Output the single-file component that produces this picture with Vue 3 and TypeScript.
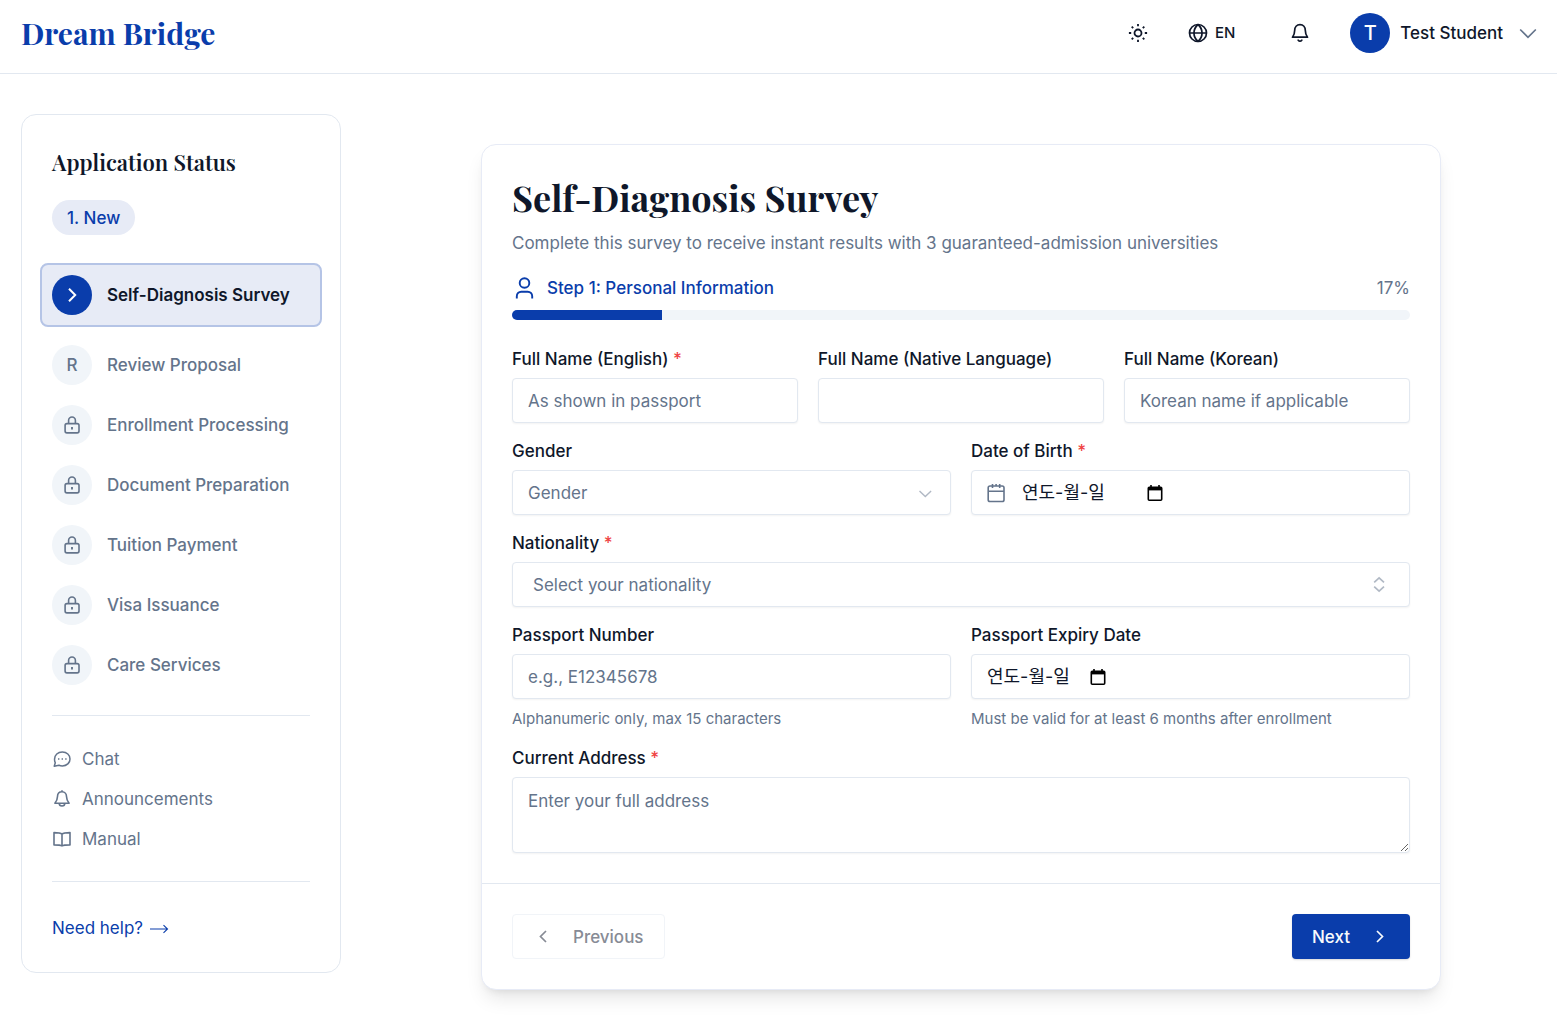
<script setup lang="ts">
import { ref } from 'vue'

interface Step {
  label: string
  state: 'active' | 'open' | 'locked'
}

const steps: Step[] = [
  { label: 'Self-Diagnosis Survey', state: 'active' },
  { label: 'Review Proposal', state: 'open' },
  { label: 'Enrollment Processing', state: 'locked' },
  { label: 'Document Preparation', state: 'locked' },
  { label: 'Tuition Payment', state: 'locked' },
  { label: 'Visa Issuance', state: 'locked' },
  { label: 'Care Services', state: 'locked' },
]

const progress = 17
const stepCount = 6

const englishName = ref('')
const nativeName = ref('')
const koreanName = ref('')
const gender = ref('')
const birthDate = ref('')
const nationality = ref('')
const passport = ref('')
const expiryDate = ref('')
const address = ref('')
</script>

<template>
  <div class="page">
    <header class="topbar">
      <a class="brand" href="#">Dream Bridge</a>
      <div class="actions">
        <button class="icon-btn" type="button" aria-label="Toggle theme">
          <svg width="20" height="20" viewBox="0 0 20 20" fill="none" stroke="currentColor" stroke-width="1.8">
            <circle cx="10" cy="10" r="3.5" />
            <path d="M10 .9v2.300M10 16.800v2.300M.9 10h2.300M16.800 10h2.300M3.700 3.700l1.500 1.500M14.800 14.800l1.500 1.500M3.700 16.300l1.500-1.500M14.800 5.200l1.500-1.500" />
          </svg>
        </button>
        <button class="lang" type="button">
          <svg width="20" height="20" viewBox="0 0 20 20" fill="none" stroke="currentColor" stroke-width="1.700">
            <circle cx="10" cy="10" r="8.500" />
            <path d="M1.500 10h17M10 1.500c-5.400 4.800-5.400 12.200 0 17M10 1.500c5.400 4.800 5.400 12.200 0 17" />
          </svg>
          <span>EN</span>
        </button>
        <button class="icon-btn" type="button" aria-label="Notifications">
          <svg width="20" height="20" viewBox="0 0 20 20" fill="none" stroke="currentColor" stroke-width="1.700" stroke-linejoin="round">
            <path d="M10 1.600c-3.300 0-5.300 2.500-5.300 5.700 0 3.700-1.100 5.400-2.200 6.900h15c-1.100-1.500-2.200-3.200-2.200-6.900 0-3.200-2-5.700-5.300-5.700z" />
            <path d="M8.200 17.200c.5.600 1.100.900 1.800.900s1.300-.3 1.800-.9" stroke-linecap="round" />
          </svg>
        </button>
        <button class="user" type="button">
          <span class="avatar">T</span>
          <span>Test Student</span>
          <svg class="caret" width="18" height="18" viewBox="0 0 18 18" fill="none" stroke="currentColor" stroke-width="1.700">
            <path d="M1.200 5.500l7.800 7.800 7.800-7.800" />
          </svg>
        </button>
      </div>
    </header>

    <div class="layout">
      <aside class="sidebar">
        <h2>Application Status</h2>
        <span class="pill">1. New</span>

        <ol class="steps">
          <li v-for="step in steps" :key="step.label" class="step" :class="step.state">
            <span class="dot">
              <svg v-if="step.state === 'active'" width="20" height="20" viewBox="0 0 20 20" fill="none" stroke="currentColor" stroke-width="2">
                <path d="M7 3.800l6.200 6.200L7 16.200" />
              </svg>
              <template v-else-if="step.state === 'open'">R</template>
              <svg v-else width="20" height="20" viewBox="0 0 20 20" fill="none" stroke="currentColor" stroke-width="1.600">
                <rect x="3.100" y="8.600" width="13.900" height="9.300" rx="1.800" />
                <path d="M6.600 8.600V5.400a3.400 3.400 0 0 1 6.800 0v3.200" />
                <path d="M10 12v2.600" stroke-width="1.900" />
              </svg>
            </span>
            <span>{{ step.label }}</span>
          </li>
        </ol>

        <nav class="links">
          <a href="#">
            <svg width="20" height="20" viewBox="0 0 20 20" fill="none" stroke="currentColor" stroke-width="1.500" stroke-linejoin="round">
              <path d="M10.300 3c4.500 0 7.700 3 7.700 6.900 0 4-3.200 7-7.700 7-1.200 0-2.300-.2-3.300-.600L2.200 17.200l1.100-3.400A6.600 6.600 0 0 1 2.600 9.900C2.600 6 5.800 3 10.300 3z" />
              <path d="M6 10h1.400M9.600 10H11M13.200 10h1.400" />
            </svg>
            Chat
          </a>
          <a href="#">
            <svg width="20" height="20" viewBox="0 0 20 20" fill="none" stroke="currentColor" stroke-width="1.600" stroke-linejoin="round">
              <path d="M10 2.800c-2.900 0-4.500 2.200-4.500 4.800 0 3.400-1.300 5-2.600 6.600h14.200c-1.300-1.600-2.600-3.200-2.600-6.600 0-2.600-1.600-4.800-4.500-4.800zM10 1.200v1.600M7.200 14.200a2.800 2.800 0 0 0 5.600 0" />
            </svg>
            Announcements
          </a>
          <a href="#">
            <svg width="20" height="20" viewBox="0 0 20 20" fill="none" stroke="currentColor" stroke-width="1.600" stroke-linejoin="round">
              <path d="M10 5C8.600 3.700 7 3.600 2 3.600v12.300c5 0 6.600.1 8 1 1.400-.9 3-1 8-1V3.600c-5 0-6.600.1-8 1.400zM10 5v11.900" />
            </svg>
            Manual
          </a>
        </nav>

        <a class="help" href="#">
          Need help?
          <svg width="20" height="12" viewBox="0 0 20 12" fill="none" stroke="currentColor" stroke-width="1.100">
            <path d="M0 7h17.500M13.500 3.200l4 3.800-4 3.800" />
          </svg>
        </a>
      </aside>

      <main class="main">
        <form class="card" @submit.prevent>
          <div class="body">
            <h1>Self-Diagnosis Survey</h1>
            <p class="subtitle">Complete this survey to receive instant results with 3 guaranteed-admission universities</p>

            <div class="progress-head">
              <svg width="25" height="25" viewBox="0 0 25 25" fill="none" stroke="currentColor" stroke-width="1.900">
                <circle cx="12.500" cy="7" r="4.800" />
                <path d="M4.800 22.500v-2.300c0-2.600 1.900-4.500 4.500-4.500h6.400c2.600 0 4.500 1.900 4.500 4.500v2.300" />
              </svg>
              <span class="progress-title">Step 1: Personal Information</span>
              <span class="percent">{{ progress }}%</span>
            </div>
            <div class="track" role="progressbar" :aria-valuenow="progress" aria-valuemin="0" aria-valuemax="100">
              <div class="fill" :style="{ width: 100 / stepCount + '%' }"></div>
            </div>

            <div class="fields">
              <div class="row three">
                <div class="field">
                  <label for="name-en">Full Name (English) <span class="req">*</span></label>
                  <input id="name-en" v-model="englishName" class="control" type="text" placeholder="As shown in passport" />
                </div>
                <div class="field">
                  <label for="name-native">Full Name (Native Language)</label>
                  <input id="name-native" v-model="nativeName" class="control" type="text" />
                </div>
                <div class="field">
                  <label for="name-ko">Full Name (Korean)</label>
                  <input id="name-ko" v-model="koreanName" class="control" type="text" placeholder="Korean name if applicable" />
                </div>
              </div>

              <div class="row two">
                <div class="field">
                  <label for="gender">Gender</label>
                  <div class="select">
                    <select id="gender" v-model="gender" class="control">
                      <option value="">Gender</option>
                      <option value="female">Female</option>
                      <option value="male">Male</option>
                    </select>
                    <svg class="arrow" width="20" height="20" viewBox="0 0 20 20" fill="none" stroke="currentColor" stroke-width="1.400">
                      <path d="M3.500 8l5.800 5.500L15.100 8" />
                    </svg>
                  </div>
                </div>
                <div class="field">
                  <label for="birth">Date of Birth <span class="req">*</span></label>
                  <div class="control date birth">
                    <svg class="lead" width="20" height="20" viewBox="0 0 20 20" fill="none" stroke="currentColor" stroke-width="1.600">
                      <rect x="1.200" y="3" width="15.800" height="15.500" rx="1.800" />
                      <path d="M1.200 8.200H17M5.500 1v4M12.700 1v4M9.100 1v2" />
                    </svg>
                    <input id="birth" v-model="birthDate" type="text" placeholder="연도-월-일" />
                    <button class="picker" type="button" aria-label="Choose date of birth">
                      <svg width="16" height="16" viewBox="0 0 16 16" fill="none" stroke="currentColor" stroke-width="1.600">
                        <rect x="1.300" y="2.300" width="13.400" height="12.900" rx="1" />
                        <path d="M1.300 3.800h13.400" stroke-width="3.200" />
                        <path d="M4 0v3M12 0v3" />
                      </svg>
                    </button>
                  </div>
                </div>
              </div>

              <div class="field">
                <label for="nationality">Nationality <span class="req">*</span></label>
                <div class="select wide">
                  <select id="nationality" v-model="nationality" class="control">
                    <option value="">Select your nationality</option>
                    <option value="kr">South Korea</option>
                    <option value="vn">Vietnam</option>
                  </select>
                  <svg class="arrow" width="20" height="20" viewBox="0 0 20 20" fill="none" stroke="currentColor" stroke-width="1.600">
                    <path d="M4.200 7.400l4.900-4.600L14 7.400M4.200 11.600l4.900 4.600 4.900-4.600" />
                  </svg>
                </div>
              </div>

              <div class="row two">
                <div class="field">
                  <label for="passport">Passport Number</label>
                  <input id="passport" v-model="passport" class="control" type="text" maxlength="15" placeholder="e.g., E12345678" />
                  <p class="hint">Alphanumeric only, max 15 characters</p>
                </div>
                <div class="field">
                  <label for="expiry">Passport Expiry Date</label>
                  <div class="control date">
                    <input id="expiry" v-model="expiryDate" type="text" placeholder="연도-월-일" />
                    <button class="picker" type="button" aria-label="Choose passport expiry date">
                      <svg width="16" height="16" viewBox="0 0 16 16" fill="none" stroke="currentColor" stroke-width="1.600">
                        <rect x="1.300" y="2.300" width="13.400" height="12.900" rx="1" />
                        <path d="M1.300 3.800h13.400" stroke-width="3.200" />
                        <path d="M4 0v3M12 0v3" />
                      </svg>
                    </button>
                  </div>
                  <p class="hint">Must be valid for at least 6 months after enrollment</p>
                </div>
              </div>

              <div class="field">
                <label for="address">Current Address <span class="req">*</span></label>
                <textarea id="address" v-model="address" class="control" placeholder="Enter your full address"></textarea>
              </div>
            </div>
          </div>

          <footer class="footer">
            <button class="btn previous" type="button" disabled>
              <svg width="20" height="20" viewBox="0 0 20 20" fill="none" stroke="currentColor" stroke-width="1.700">
                <path d="M13 4l-5.500 5.500L13 15" />
              </svg>
              Previous
            </button>
            <button class="btn next" type="submit">
              Next
              <svg width="20" height="20" viewBox="0 0 20 20" fill="none" stroke="currentColor" stroke-width="1.700">
                <path d="M7 4l5.500 5.500L7 15" />
              </svg>
            </button>
          </footer>
        </form>
      </main>
    </div>
  </div>
</template>

<style>
body {
  margin: 0;
  background: #fff;
}
</style>

<style scoped>
* {
  box-sizing: border-box;
}

.page {
  color: #0f172a;
  font-family: Inter, 'Noto Sans CJK KR', sans-serif;
  font-size: 17px;
  line-height: 26px;
}

svg {
  display: block;
  flex: none;
}

button,
input,
select,
textarea {
  font: inherit;
  color: inherit;
}

button {
  display: flex;
  align-items: center;
  padding: 0;
  border: 0;
  background: none;
}

a {
  color: inherit;
  text-decoration: none;
}

h1,
h2 {
  margin: 0;
  font-family: 'Playfair Display', 'Liberation Serif', serif;
}

/* Top bar */
.topbar {
  display: flex;
  align-items: center;
  justify-content: space-between;
  height: 74px;
  padding: 0 20px 8px 21px;
  border-bottom: 1px solid #e2e8f0;
}

.brand {
  color: #0a3dab;
  font-family: 'Playfair Display', 'Liberation Serif', serif;
  font-size: 30px;
  font-weight: 700;
  line-height: 40px;
}

.actions {
  display: flex;
  align-items: center;
  font-weight: 500;
}

.icon-btn {
  justify-content: center;
  width: 40px;
  height: 40px;
}

.lang {
  gap: 7px;
  margin: 0 45px 0 30px;
  font-size: 15px;
}

.user {
  gap: 10px;
  margin-left: 30px;
}

.avatar {
  width: 40px;
  height: 40px;
  border-radius: 50%;
  background: #0a3dab;
  color: #fff;
  font-size: 20px;
  line-height: 40px;
  text-align: center;
}

.caret {
  margin-left: 6px;
  color: #64748b;
}

/* Page columns */
.layout {
  display: grid;
  grid-template-columns: 320px minmax(0, 1fr);
  align-items: start;
  gap: 45px;
  padding: 40px 21px 30px;
}

.sidebar {
  padding: 30px;
  border: 1px solid #e2e8f0;
  border-radius: 15px;
}

h2 {
  font-size: 22px;
  font-weight: 600;
  line-height: 35px;
}

.pill {
  display: block;
  width: fit-content;
  margin: 20px 0 28px;
  padding: 5px 15px 4px;
  border-radius: 18px;
  background: #e7ebf6;
  color: #0a3dab;
  font-weight: 500;
}

.steps {
  display: flex;
  flex-direction: column;
  gap: 20px;
  margin: 0;
  padding: 0 0 30px;
  border-bottom: 1px solid #e2e8f0;
  list-style: none;
}

.step {
  display: flex;
  align-items: center;
  gap: 15px;
  color: #64748b;
  font-weight: 500;
}

.step.active {
  margin: 0 -12px -2px;
  padding: 10px;
  border: 2px solid #b5c4e6;
  border-radius: 8px;
  background: #e7ebf6;
  color: #0f172a;
  font-weight: 600;
}

.dot {
  display: flex;
  flex: none;
  align-items: center;
  justify-content: center;
  width: 40px;
  height: 40px;
  border-radius: 50%;
  background: #f1f5f9;
}

.active .dot {
  background: #0a3dab;
  color: #fff;
}

.links {
  display: flex;
  flex-direction: column;
  gap: 14px;
  padding: 30px 0 29px;
  border-bottom: 1px solid #e2e8f0;
  color: #64748b;
}

.links a {
  display: flex;
  align-items: center;
  gap: 10px;
}

.help {
  display: flex;
  align-items: center;
  gap: 7px;
  padding-top: 32px;
  color: #0a3dab;
  line-height: 28px;
}

/* Survey card */
.main {
  padding-top: 30px;
}

.card {
  max-width: 960px;
  margin: 0 auto;
  border: 1px solid #e7ebf6;
  border-radius: 15px;
  background: #fff;
  box-shadow: 0 12px 19px -4px rgb(0 0 0 / 10%), 0 5px 8px -5px rgb(0 0 0 / 10%);
}

.body {
  padding: 30px;
}

h1 {
  font-size: 36px;
  font-weight: 700;
  line-height: 45px;
}

.subtitle {
  margin: 10px 0 19px;
  color: #64748b;
}

.progress-head {
  display: flex;
  align-items: center;
  gap: 10px;
  margin-bottom: 9px;
  color: #0a3dab;
}

.progress-title {
  flex: 1;
  font-weight: 500;
}

.percent {
  color: #64748b;
}

.track {
  height: 10px;
  margin-bottom: 29px;
  overflow: hidden;
  border-radius: 5px;
  background: #f1f5f9;
}

.fill {
  height: 100%;
  background: #0a3dab;
}

.fields {
  display: flex;
  flex-direction: column;
  gap: 18px;
}

.row {
  display: grid;
  gap: 20px;
}

.three {
  grid-template-columns: repeat(3, minmax(0, 1fr));
}

.two {
  grid-template-columns: repeat(2, minmax(0, 1fr));
}

.field {
  display: flex;
  flex-direction: column;
  gap: 9px;
}

label {
  font-weight: 500;
  line-height: 20px;
}

.req {
  color: #ef4444;
}

.control {
  width: 100%;
  height: 45px;
  padding: 0 15px;
  border: 1px solid #e2e8f0;
  border-radius: 4px;
  outline: none;
  background: #fff;
  box-shadow: 0 1px 2px rgb(0 0 0 / 5%);
}

.control::placeholder {
  color: #64748b;
  opacity: 1;
}

textarea.control {
  display: block;
  height: 76px;
  padding: 10px 15px;
  resize: vertical;
}

.select {
  position: relative;
}

select.control {
  appearance: none;
  color: #64748b;
}

.wide select.control {
  padding: 0 20px;
}

.arrow {
  position: absolute;
  top: 13px;
  right: 15px;
  color: #64748b;
  opacity: 0.5;
  pointer-events: none;
}

.wide .arrow {
  right: 20px;
}

.date {
  display: flex;
  align-items: center;
}

.date input {
  width: 103px;
  padding: 0;
  border: 0;
  outline: none;
  background: none;
  font-size: 18px;
}

.date input::placeholder {
  color: #0f172a;
  opacity: 1;
}

.birth input {
  width: 125px;
}

.lead {
  margin-right: 15px;
  color: #64748b;
}

.picker {
  color: #000;
}

.hint {
  margin: 0;
  color: #64748b;
  font-size: 15px;
  line-height: 22px;
}

.footer {
  display: flex;
  justify-content: space-between;
  padding: 30px;
  border-top: 1px solid #e2e8f0;
}

.btn {
  gap: 20px;
  height: 45px;
  padding: 0 20px;
  border-radius: 4px;
  font-weight: 500;
}

.previous {
  border: 1px solid #f1f4f8;
  background: #fff;
  color: #878b95;
}

.next {
  background: #0a3dab;
  box-shadow: 0 1px 2px rgb(0 0 0 / 15%);
  color: #f8fafc;
}
</style>
